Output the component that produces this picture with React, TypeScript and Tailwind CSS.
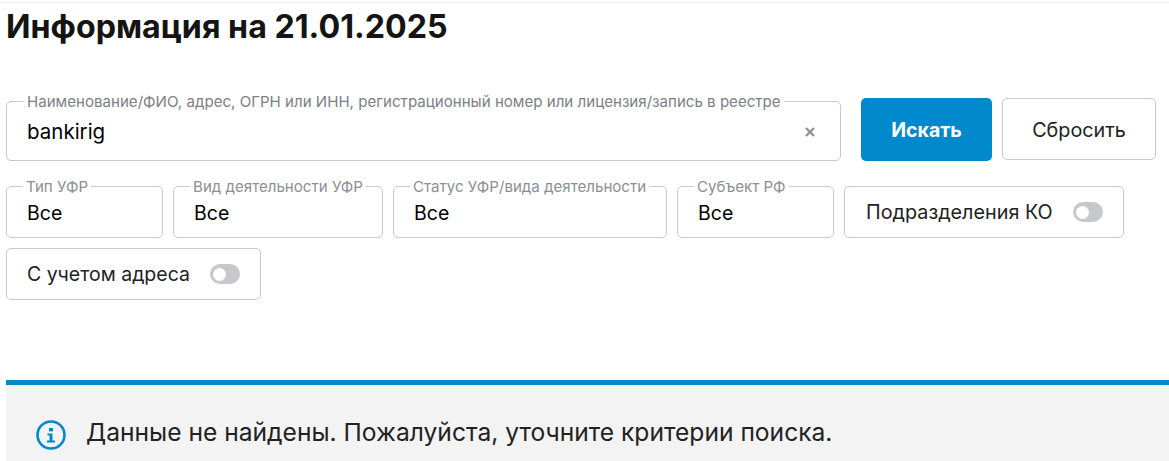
import React from "react";

const font = { fontFamily: "Inter, 'Noto Sans', sans-serif" };

function Field({ label, value, width }: { label: string; value: string; width: string }) {
  return (
    <fieldset className={`${width} h-[60px] shrink-0 rounded-[5px] border border-[#c6c8cc] pl-[20px]`}>
      <legend className="-ml-[4px] px-[3px] text-[15.1px] leading-[17px] text-[#8b8f96] whitespace-nowrap">{label}</legend>
      <div className="mt-[6px] text-[19.5px] leading-[24px] text-black">{value}</div>
    </fieldset>
  );
}

function Toggle({ label, width, size, inset }: { label: string; width: string; size: string; inset: string }) {
  return (
    <div className={`${width} ${inset} flex h-[52px] shrink-0 items-center gap-[20px] rounded-[5px] border border-[#c6c8cc]`}>
      <span className={`${size} pt-[2px] text-[#222]`}>{label}</span>
      <span className="flex h-[20px] w-[30px] items-center rounded-full bg-[#c6c8cc] pl-[3px]">
        <span className="h-[13px] w-[13px] rounded-full bg-white" />
      </span>
    </div>
  );
}

export default function App() {
  return (
    <div className="h-[461px] w-[1169px] overflow-hidden bg-white" style={font}>
      <div className="h-[3px] border-b border-[#f4f4f4]" />
      <div className="pl-[6px]">
        <h1 className="mt-[5px] text-[32.2px] font-bold leading-[38px] text-[#141414]">Информация на 21.01.2025</h1>

        <div className="mt-[48px] flex items-start">
          <fieldset className="h-[67px] w-[835px] rounded-[5px] border border-[#c6c8cc] pl-[17px] pr-[24px]">
            <legend className="px-[3px] text-[15.1px] leading-[15px] whitespace-nowrap text-[#7c8087]">
              Наименование/ФИО, адрес, ОГРН или ИНН, регистрационный номер или лицензия/запись в реестре
            </legend>
            <div className="flex items-center justify-between">
              <span className="mt-[11px] ml-[3px] text-[20.5px] leading-[24px] text-black">bankirig</span>
              <svg className="mt-[11px]" width="12" height="12" viewBox="0 0 12 12">
                <path d="M2 2l8 8M10 2l-8 8" stroke="#8f939a" strokeWidth="2.4" />
              </svg>
            </div>
          </fieldset>
          <button className="ml-[20px] mt-[4px] h-[63px] w-[131px] rounded-[5px] bg-[#0088cc] pt-[2px] text-[19.5px] font-bold text-white">Искать</button>
          <button className="ml-[10px] mt-[4px] h-[62px] w-[154px] rounded-[5px] border border-[#c6c8cc] pt-[3px] text-[19.8px] text-[#222]">Сбросить</button>
        </div>

        <div className="mt-[17px] flex flex-wrap items-end gap-[10px]">
          <Field label="Тип УФР" value="Все" width="w-[157px]" />
          <Field label="Вид деятельности УФР" value="Все" width="w-[210px]" />
          <Field label="Статус УФР/вида деятельности" value="Все" width="w-[274px]" />
          <Field label="Субъект РФ" value="Все" width="w-[157px]" />
          <Toggle label="Подразделения КО" width="w-[280px]" size="text-[19.8px]" inset="pl-[21px]" />
          <Toggle label="С учетом адреса" width="w-[255px]" size="text-[19.5px]" inset="pl-[20px]" />
        </div>

        <div className="mt-[80px] flex h-[81px] items-start border-t-[5px] border-[#0088cc] bg-[#f3f3f3] pl-[30px] pt-[30px]">
          <svg width="30" height="30" viewBox="0 0 30 30" className="mt-[5px]">
            <circle cx="15" cy="15" r="13.5" fill="none" stroke="#0088cc" strokeWidth="2.6" />
            <rect x="13" y="8" width="4" height="3.4" fill="#0088cc" />
            <path d="M11.5 13.5h5v7h2.500v2h-8v-2h2.500v-5h-2z" fill="#0088cc" />
          </svg>
          <p className="ml-[20px] text-[24.6px] leading-[34px] text-[#222]">Данные не найдены. Пожалуйста, уточните критерии поиска.</p>
        </div>
      </div>
    </div>
  );
}
